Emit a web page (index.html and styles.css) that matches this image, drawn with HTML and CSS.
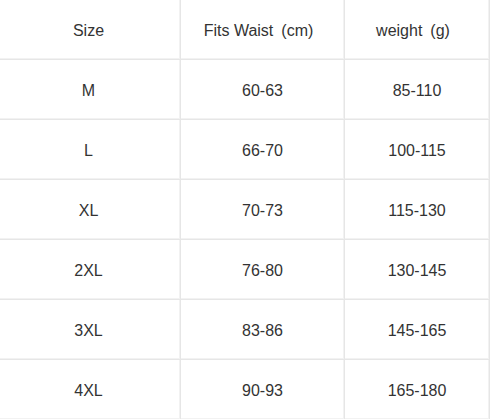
FILE: index.html
```html
<!DOCTYPE html>
<html>
<head>
<meta charset="utf-8">
<link rel="stylesheet" href="styles.css">
</head>
<body>
<div class="size-table">
  <div class="cell first">Size</div><div class="cell">Fits Waist&ensp;(cm)&ensp;</div><div class="cell">weight&ensp;(g)&ensp;</div>
  <div class="cell first">M</div><div class="cell">60-63</div><div class="cell">85-110</div>
  <div class="cell first">L</div><div class="cell">66-70</div><div class="cell">100-115</div>
  <div class="cell first">XL</div><div class="cell">70-73</div><div class="cell">115-130</div>
  <div class="cell first">2XL</div><div class="cell">76-80</div><div class="cell">130-145</div>
  <div class="cell first">3XL</div><div class="cell">83-86</div><div class="cell">145-165</div>
  <div class="cell first">4XL</div><div class="cell">90-93</div><div class="cell">165-180</div>
</div>
</body>
</html>
```
FILE: styles.css
```css
html, body {
  margin: 0;
  padding: 0;
  background: #ffffff;
}
.size-table {
  display: grid;
  grid-template-columns: 181px 164px 145px;
  grid-auto-rows: 60px;
  font-family: "Liberation Sans", Arial, sans-serif;
  font-size: 16px;
  color: #333333;
}
.cell {
  display: flex;
  align-items: center;
  justify-content: center;
  border-right: 1px solid #e6e6e6;
  border-bottom: 1px solid #e6e6e6;
  box-shadow: inset -1px -1px 0 #f2f2f2;
  padding-top: 2px;
}
.first {
  padding-right: 3px;
}
```
